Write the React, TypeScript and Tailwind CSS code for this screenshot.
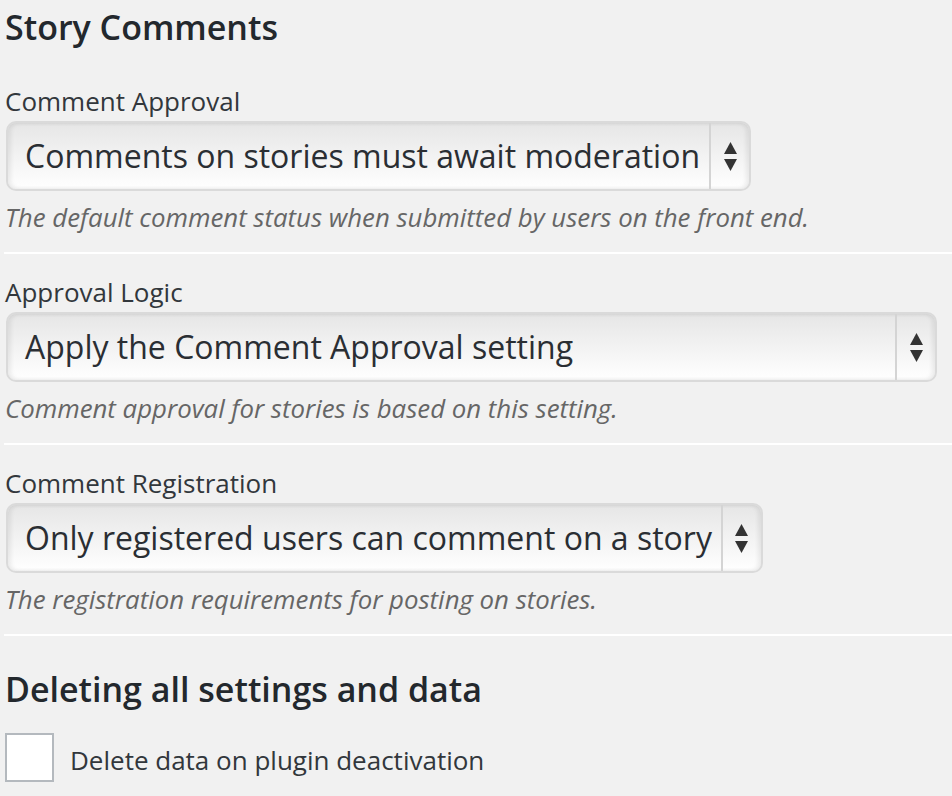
type SelectProps = {
  value: string;
  width?: string;
};

const FakeSelect = ({ value, width }: SelectProps) => {
  return (
    <div
      className={`ml-[1px] inline-flex h-[70px] items-stretch rounded-[10px] border-2 border-[#dadada] bg-gradient-to-b from-[#e6e6e6] to-white shadow-[inset_3px_0_4px_rgba(0,0,0,0.07),inset_-3px_0_4px_rgba(0,0,0,0.07)] ${width ?? ""}`}
    >
      <div className="flex flex-1 items-center whitespace-nowrap pl-[17px] pr-[9px] text-[32px] leading-none text-[#2a2e33]">
        {value}
      </div>
      <div className="w-[2px] bg-[#d4d4d4]" />
      <div className="flex w-[38px] items-center justify-center">
        <svg width="13" height="29" viewBox="0 0 13 29">
          <polygon points="6.5,0 13,12 0,12" fill="#333" />
          <polygon points="0,17 13,17 6.5,29" fill="#333" />
        </svg>
      </div>
    </div>
  );
};

const settings = [
  {
    label: "Comment Approval",
    value: "Comments on stories must await moderation",
    help: "The default comment status when submitted by users on the front end.",
    width: "",
  },
  {
    label: "Approval Logic",
    value: "Apply the Comment Approval setting",
    help: "Comment approval for stories is based on this setting.",
    width: "w-[931px]",
  },
  {
    label: "Comment Registration",
    value: "Only registered users can comment on a story",
    help: "The registration requirements for posting on stories.",
    width: "",
  },
];

export default function App() {
  return (
    <div
      className="min-h-screen w-[952px] overflow-hidden bg-[#f1f1f1] pl-[5px] pt-[5px] text-[#32373c]"
      style={{ fontFamily: '"Open Sans", "Liberation Sans", sans-serif' }}
    >
      {/* Story comments */}
      <h2 className="h-[44px] text-[34px] font-semibold leading-[44px] text-[#23282d]">
        Story Comments
      </h2>

      <div className="mt-[34px]">
        {settings.map((item, i) => (
          <div key={i} className={i === 0 ? "" : "mt-[20px]"}>
            <label className="block h-[36px] text-[26px] leading-[36px] text-[#32373c]">
              {item.label}
            </label>
            <div className="mt-[2px]">
              <FakeSelect value={item.value} width={item.width} />
            </div>
            <p className="mt-[8px] h-[36px] text-[25.8px] italic leading-[36px] text-[#666]">
              {item.help}
            </p>
            <div className="-ml-[1px] mt-[17px] h-[2px] bg-white" />
          </div>
        ))}
      </div>

      {/* Deleting data */}
      <h2 className="mt-[31px] h-[44px] text-[34px] font-semibold leading-[44px] text-[#23282d]">
        Deleting all settings and data
      </h2>

      <div className="mt-[22px] flex items-center">
        <span className="h-[49px] w-[49px] border-2 border-[#b4b9be] bg-white" />
        <span className="ml-[16px] mt-[5px] text-[26px] leading-[36px] text-[#32373c]">
          Delete data on plugin deactivation
        </span>
      </div>
    </div>
  );
}
